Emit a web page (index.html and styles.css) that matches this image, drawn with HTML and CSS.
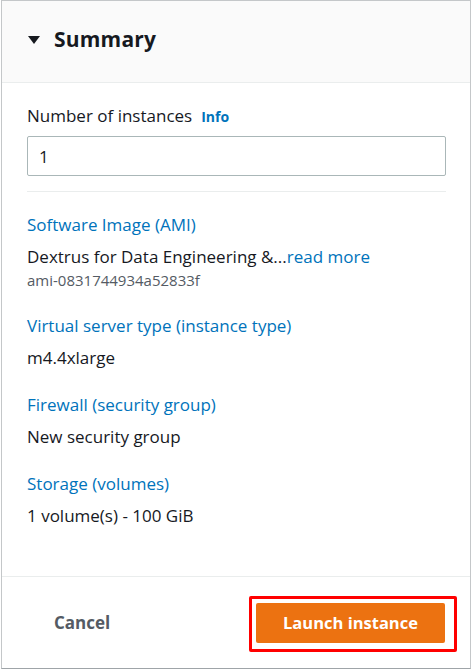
FILE: index.html
```html
<!DOCTYPE html>
<html lang="en">
<head>
    <meta charset="UTF-8">
    <meta name="viewport" content="width=device-width, initial-scale=1.0">
    <title>Summary</title>
    <link rel="stylesheet" href="styles.css">
</head>
<body>
    <div class="panel">
        <div class="panel-header">
            <span class="caret"></span>
            <h2>Summary</h2>
        </div>

        <div class="panel-body">
            <div class="field-label">
                <label for="instance-count">Number of instances</label>
                <a href="#" class="info-link">Info</a>
            </div>
            <input type="text" id="instance-count" class="count-input" value="1">

            <hr class="divider">

            <div class="summary-item">
                <a href="#" class="item-title">Software Image (AMI)</a>
                <div class="item-value">Dextrus for Data Engineering &amp;...<a href="#" class="read-more">read more</a></div>
                <div class="item-sub">ami-0831744934a52833f</div>
            </div>

            <div class="summary-item">
                <a href="#" class="item-title">Virtual server type (instance type)</a>
                <div class="item-value">m4.4xlarge</div>
            </div>

            <div class="summary-item">
                <a href="#" class="item-title">Firewall (security group)</a>
                <div class="item-value">New security group</div>
            </div>

            <div class="summary-item">
                <a href="#" class="item-title">Storage (volumes)</a>
                <div class="item-value">1 volume(s) - 100 GiB</div>
            </div>
        </div>

        <div class="panel-footer">
            <button class="btn-cancel">Cancel</button>
            <div class="highlight">
                <button class="btn-launch">Launch instance</button>
            </div>
        </div>
    </div>
</body>
</html>
```

FILE: styles.css
```css
body {
    font-family: 'Open Sans', 'Noto Sans', Arial, sans-serif;
    margin: 0;
    background-color: #fff;
    color: #16191f;
}

.panel {
    margin-left: 1px;
    width: 468px;
    height: 667px;
    border: 1px solid #c4c7c9;
    border-bottom-color: #9fa4a8;
    display: flex;
    flex-direction: column;
}

.panel-header {
    box-sizing: border-box;
    height: 82px;
    background-color: #fafafa;
    border-bottom: 1px solid #eaeded;
    display: flex;
    align-items: center;
    padding: 0 0 5px 26px;
}

.caret {
    width: 0;
    height: 0;
    border-left: 6px solid transparent;
    border-right: 6px solid transparent;
    border-top: 8px solid #16191f;
    margin-right: 14px;
    margin-top: 2px;
}

.panel-header h2 {
    margin: 0;
    font-size: 21px;
    font-weight: bold;
    letter-spacing: 0.2px;
}

.panel-body {
    flex-grow: 1;
    padding: 22px 24px 0 25px;
}

.field-label {
    font-size: 17px;
    line-height: 22px;
    display: flex;
    align-items: baseline;
    gap: 9px;
}

.info-link {
    font-size: 14px;
    font-weight: bold;
    color: #0073bb;
    text-decoration: none;
}

.count-input {
    display: block;
    box-sizing: border-box;
    width: 100%;
    height: 40px;
    margin-top: 8px;
    padding: 0 11px;
    border: 1px solid #aab7b8;
    border-radius: 2px;
    font-family: inherit;
    font-size: 17px;
    color: #16191f;
}

.divider {
    border: none;
    border-top: 1px solid #eaeded;
    margin: 15px 0 22px;
}

.summary-item {
    margin-bottom: 25px;
}

.item-title {
    display: block;
    font-size: 17px;
    line-height: 22px;
    color: #0073bb;
    text-decoration: none;
}

.item-value {
    font-size: 17px;
    line-height: 22px;
    margin-top: 10px;
}

.read-more {
    color: #0073bb;
    text-decoration: none;
}

.item-sub {
    font-size: 15px;
    line-height: 20px;
    color: #545b64;
    margin-top: 2px;
}

.panel-footer {
    border-top: 1px solid #eaeded;
    height: 91px;
    display: flex;
    align-items: center;
    justify-content: space-between;
    padding: 0 13px 0 28px;
}

.btn-cancel {
    background: none;
    border: none;
    padding: 8px 24px;
    font-family: inherit;
    font-size: 17px;
    font-weight: bold;
    color: #545b64;
    cursor: pointer;
}

/* red frame drawn around the primary action */
.highlight {
    border: 3px solid #ff0000;
    border-radius: 2px;
    padding: 4px 9px 6px 4px;
    margin-top: 2px;
}

.btn-launch {
    display: block;
    width: 189px;
    height: 40px;
    background-color: #ec7211;
    border: none;
    border-radius: 2px;
    font-family: inherit;
    font-size: 16.5px;
    font-weight: bold;
    color: #fff;
    cursor: pointer;
}
```
